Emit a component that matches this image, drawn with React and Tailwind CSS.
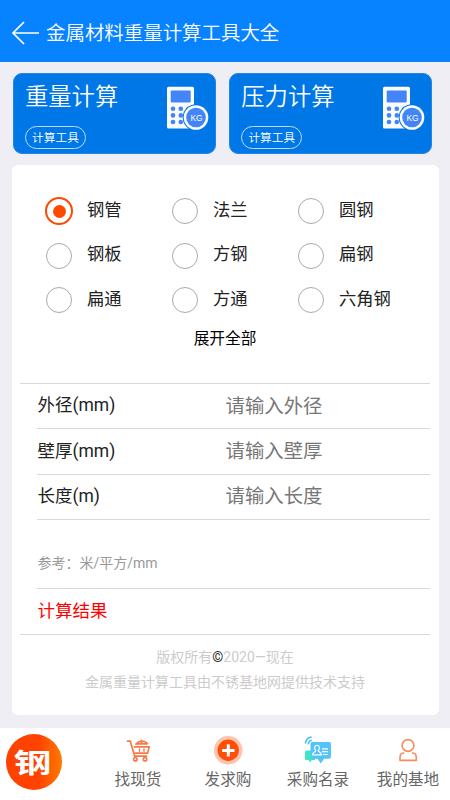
import { useState } from 'react';

const tools = ['重量计算', '压力计算'];

const metals = ['钢管', '法兰', '圆钢', '钢板', '方钢', '扁钢', '扁通', '方通', '六角钢'];

const fields = [
  { key: 'outer', label: '外径(mm)', placeholder: '请输入外径' },
  { key: 'wall', label: '壁厚(mm)', placeholder: '请输入壁厚' },
  { key: 'length', label: '长度(m)', placeholder: '请输入长度' },
];

const CalculatorIcon = () => (
  <svg width="44" height="44" viewBox="0 0 44 44" className="shrink-0">
    <rect x="1" y="0.700" width="27" height="41.800" rx="1.500" fill="#fafcff" />
    <rect x="4.700" y="4.500" width="20" height="12" rx="1" fill="#4385f6" />
    {[22.7, 29.4, 36].map(y => (
      <g key={y} fill="#4385f6">
        <circle cx="7" cy={y} r="2.3" />
        <circle cx="14.800" cy={y} r="2.3" />
        <circle cx="22.500" cy={y} r="2.3" />
      </g>
    ))}
    <circle cx="30" cy="31.500" r="13.300" fill="#0077e6" />
    <circle cx="30" cy="31.500" r="12.300" fill="#fafcff" />
    <circle cx="30" cy="31.500" r="9.800" fill="#4385f6" />
    <text x="30.500" y="34.500" textAnchor="middle" fontSize="8.400" fill="#fff" fontFamily="Liberation Sans, sans-serif">KG</text>
  </svg>
);

const CartIcon = () => (
  <svg width="32" height="32" viewBox="0 0 32 32" fill="none" stroke="#f87a48" strokeWidth="1.7" strokeLinecap="round" strokeLinejoin="round">
    <path d="M5.5 6.2h2.8l4.3 14.9h12" />
    <path d="M12.500 11.800h14.700l-1.500 6.300H13" />
    <path d="M14 9.200c2.500-3.600 8-4.200 11.500-.6M19.500 5.400v3.400M14 8.800h11" />
    <path d="M17.500 14v2.200M22 14v2.200" strokeWidth="1.400" />
    <circle cx="13.300" cy="24.200" r="1.700" />
    <circle cx="23" cy="24.200" r="1.700" />
  </svg>
);

const PlusIcon = () => (
  <svg width="32" height="32" viewBox="0 0 32 32">
    <circle cx="16.200" cy="15.300" r="14.300" fill="#ffc4b0" />
    <circle cx="16.200" cy="15.300" r="10.700" fill="#fe4e08" />
    <path d="M16.300 9.300v12.200M10.100 15.400h12.400" stroke="#fff" strokeWidth="3" />
  </svg>
);

const DirectoryIcon = () => (
  <svg width="32" height="32" viewBox="0 0 32 32">
    <path d="M4.500 15.500H13v9.500H9.800l-1.600 2.500L6.600 25H4.500A1.500 1.500 0 0 1 3 23.500V17a1.500 1.500 0 0 1 1.500-1.500z" fill="#3fe5c0" />
    <path d="M10.500 7h16.500a2 2 0 0 1 2 2v12.700a2 2 0 0 1-2 2h-5l-3.200 4.900-3.300-4.900h-5a2 2 0 0 1-2-2V9a2 2 0 0 1 2-2z" fill="#52c3fb" />
    <g fill="none" stroke="#52c3fb" strokeWidth="1.700" strokeLinecap="round">
      <path d="M3.500 7.800C4 5 6.200 2.700 9 2.200" />
      <path d="M6.300 8.700C6.500 7 7.600 5.800 9.300 5.500" />
    </g>
    <g fill="none" stroke="#fff" strokeWidth="1.200">
      <path d="M13.800 15.800c-2-2.200-1.500-5.400 1.200-5.400s3.200 3.200 1.200 5.400c.2 1.600 3.300 1 3.300 4.100h-9c0-3.100 3.100-2.500 3.300-4.100z" />
      <path d="M20 13.800h6M20 16.700h6M21 19.500h5" />
    </g>
  </svg>
);

const UserIcon = () => (
  <svg width="32" height="32" viewBox="0 0 32 32" fill="none" stroke="#f98b5f" strokeWidth="1.600" strokeLinejoin="round">
    <circle cx="16" cy="10.500" r="5.900" />
    <path d="M12.300 18c-2.800 0-4.300 1.700-4.300 4.200v3.200h16.300v-3.200c0-2.500-1.600-4.200-4.400-4.200" />
  </svg>
);

const tabs = [
  { label: '找现货', Icon: CartIcon },
  { label: '发求购', Icon: PlusIcon },
  { label: '采购名录', Icon: DirectoryIcon },
  { label: '我的基地', Icon: UserIcon },
];

const App = () => {
  const [selected, setSelected] = useState('钢管');
  const [values, setValues] = useState({ outer: '', wall: '', length: '' });

  return (
    <div className="w-[450px] h-[800px] flex flex-col overflow-hidden bg-[#efeef4] font-['Roboto','Noto_Sans_CJK_SC',sans-serif] text-[#222]">
      {/* Header */}
      <header className="h-[62px] shrink-0 bg-[#0883ff] flex items-center pt-1 pl-3 text-white">
        <svg width="28" height="24" viewBox="0 0 28 24" fill="none" stroke="#fff" strokeWidth="1.7">
          <path d="M27 12H1M12 1L1 12l11 11" />
        </svg>
        <h1 className="ml-1.5 pt-0.5 text-[19.45px] leading-6 font-[350]">金属材料重量计算工具大全</h1>
      </header>

      {/* Tool cards */}
      <div className="flex gap-[13.300px] pt-[11px] pl-[13px]">
        {tools.map(name => (
          <button key={name} className="w-[203px] h-[81px] rounded-[9px] bg-[#0077e6] border border-[#2085e8] flex justify-between text-left text-white pl-[11px] pr-[5px]">
            <div className="flex flex-col items-start pt-2">
              <span className="text-[23.300px] leading-[30px] font-[350]">{name}</span>
              <span className="mt-[14px] h-[23px] w-[61px] rounded-full border border-[#b9dcff] text-center text-[11.700px] leading-[23px] font-[350]">计算工具</span>
            </div>
            <div className="pt-3"><CalculatorIcon /></div>
          </button>
        ))}
      </div>

      {/* Calculator */}
      <main className="mt-[11px] ml-3 w-[427px] h-[550px] shrink-0 rounded-md bg-white pl-2 pr-[9px]">
        <div className="grid grid-cols-[126px_126px_126px] pl-[25px] pt-6">
          {metals.map(name => (
            <button key={name} onClick={() => setSelected(name)} className="h-[44.500px] flex items-center text-left">
              <span className="w-7 h-7 flex items-center justify-center">
                {selected === name ? (
                  <span className="w-7 h-7 shrink-0 rounded-full border-2 border-[#ff4800] flex items-center justify-center">
                    <span className="w-[13px] h-[13px] rounded-full bg-[#ff4800]" />
                  </span>
                ) : (
                  <span className="w-[26px] h-[26px] rounded-full border border-[#aaa]" />
                )}
              </span>
              <span className="ml-[14px] mb-[3.500px] text-[17.300px] leading-6">{name}</span>
            </button>
          ))}
        </div>
        <button className="block w-full h-[60.500px] pb-[33px] pt-1 text-[15.700px] leading-6 text-center text-black">展开全部</button>

        <div className="border-t border-[#d9d9d9] pl-[17px]">
          {fields.map(({ key, label, placeholder }) => (
            <label key={key} className="h-[45.300px] flex items-center border-b border-[#d9d9d9]">
              <span className="w-[188px] pl-[0.5px] pb-[1.500px] text-[17.500px] leading-6">{label}</span>
              <input
                value={values[key]}
                onChange={e => setValues({ ...values, [key]: e.target.value })}
                placeholder={placeholder}
                className="w-48 h-7 pl-[0.5px] text-[19.400px] outline-none placeholder:text-[#777]"
              />
            </label>
          ))}
          <p className="h-[69px] pt-[31px] pl-[0.5px] text-sm leading-6 text-[#999] border-b border-[#d9d9d9]">参考：米/平方/mm</p>
          <p className="h-[45px] pt-[10px] pl-[0.5px] text-[17.500px] leading-6 text-[#f00]">计算结果</p>
        </div>
        <footer className="border-t border-[#d9d9d9] pt-[10px] text-center text-sm leading-[25.500px] text-[#ccc]">
          <p>版权所有<span className="text-[#222]">©</span>2020—现在</p>
          <p>金属重量计算工具由不锈基地网提供技术支持</p>
        </footer>
      </main>

      {/* Bottom nav */}
      <nav className="mt-[13px] h-[72px] shrink-0 bg-white flex pl-[6px]">
        <div className="mt-[6px] w-14 h-14 shrink-0 rounded-full bg-linear-to-r from-[#ff4200] from-60% to-[#ff7800] flex items-center justify-center">
          <span className="pb-0.5 pr-0.5 text-[35px] leading-9 font-bold text-white font-['Noto_Sans_CJK_SC',sans-serif] scale-x-[1.08] scale-y-[0.78]">钢</span>
        </div>
        <div className="ml-[31px] flex shrink-0">
          {tabs.map(({ label, Icon }) => (
            <button key={label} className="w-[90px] pt-[7px] flex flex-col items-center text-[#666]">
              <Icon />
              <span className="mt-[3px] text-[15.600px] leading-5">{label}</span>
            </button>
          ))}
        </div>
      </nav>
    </div>
  );
};

export default App;
